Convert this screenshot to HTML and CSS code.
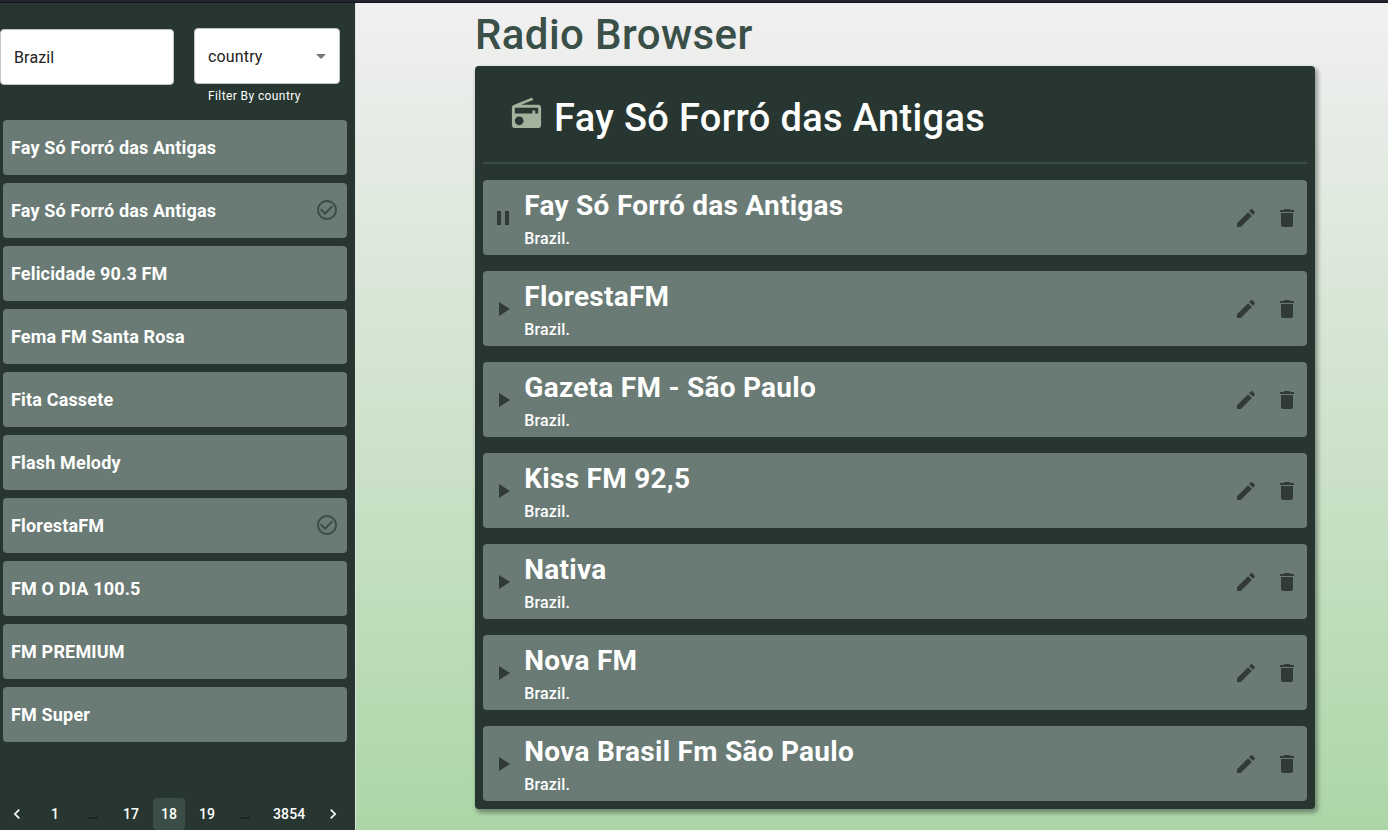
FILE: index.html
```
<!DOCTYPE html>
<html lang="en">
<head>
<meta charset="utf-8">
<title>Radio Browser</title>
<link rel="stylesheet" href="styles.css">
</head>
<body>
<svg class="defs" width="0" height="0">
  <symbol id="check" viewBox="0 0 24 24"><path d="M16.59 7.58 10 14.17l-3.59-3.58L5 12l5 5 8-8zM12 2C6.48 2 2 6.48 2 12s4.48 10 10 10 10-4.48 10-10S17.52 2 12 2zm0 18c-4.42 0-8-3.58-8-8s3.58-8 8-8 8 3.58 8 8-3.58 8-8 8z"/></symbol>
  <symbol id="play" viewBox="0 0 24 24"><path d="M8 5v14l11-7z"/></symbol>
  <symbol id="pause" viewBox="0 0 24 24"><path d="M6 19h4V5H6v14zm8-14v14h4V5h-4z"/></symbol>
  <symbol id="edit" viewBox="0 0 24 24"><path d="M3 17.25V21h3.75L17.81 9.94l-3.75-3.75L3 17.25zM20.71 7.04c.39-.39.39-1.02 0-1.41l-2.34-2.34a.9959.9959 0 0 0-1.41 0l-1.83 1.83 3.75 3.75 1.83-1.83z"/></symbol>
  <symbol id="trash" viewBox="0 0 24 24"><path d="M6 19c0 1.1.9 2 2 2h8c1.1 0 2-.9 2-2V7H6v12zM19 4h-3.500l-1-1h-5l-1 1H5v2h14V4z"/></symbol>
</svg>
<div class="strip"></div>
<div class="app">
  <aside class="sidebar">
    <div class="filters">
      <div class="field search">Brazil</div>
      <div class="filter">
        <div class="field select">country<svg class="arrow" viewBox="0 0 24 24"><path d="m7 10 5 5 5-5z"/></svg></div>
        <div class="helper">Filter By country</div>
      </div>
    </div>
    <ul class="stations">
      <li>Fay Só Forró das Antigas</li>
      <li>Fay Só Forró das Antigas<svg class="icon"><use href="#check"/></svg></li>
      <li>Felicidade 90.3 FM</li>
      <li>Fema FM Santa Rosa</li>
      <li>Fita Cassete</li>
      <li>Flash Melody</li>
      <li>FlorestaFM<svg class="icon"><use href="#check"/></svg></li>
      <li>FM O DIA 100.5</li>
      <li>FM PREMIUM</li>
      <li>FM Super</li>
    </ul>
    <nav class="pages">
      <span class="page"><svg viewBox="0 0 24 24"><path d="M15.41 7.41 14 6l-6 6 6 6 1.410-1.410L10.830 12z"/></svg></span>
      <span class="page">1</span>
      <span class="page dots">…</span>
      <span class="page">17</span>
      <span class="page current">18</span>
      <span class="page">19</span>
      <span class="page dots">…</span>
      <span class="page">3854</span>
      <span class="page"><svg viewBox="0 0 24 24"><path d="M10 6 8.590 7.410 13.170 12l-4.580 4.590L10 18l6-6z"/></svg></span>
    </nav>
  </aside>
  <main class="main">
    <h1>Radio Browser</h1>
    <section class="panel">
      <header class="playing">
        <svg class="radio" viewBox="0 0 24 24"><path d="M3.240 6.150C2.510 6.430 2 7.170 2 8v12c0 1.100.890 2 2 2h16c1.110 0 2-.900 2-2V8c0-1.110-.890-2-2-2H8.300l8.260-3.340L15.880 1 3.240 6.150zM7 20c-1.660 0-3-1.340-3-3s1.340-3 3-3 3 1.340 3 3-1.340 3-3 3zm13-8h-2v-2h-2v2H4V8h16v4z"/></svg>
        <h2>Fay Só Forró das Antigas</h2>
      </header>
      <div class="cards">
        <article class="card"><svg class="icon toggle"><use href="#pause"/></svg><div class="info"><h3>Fay Só Forró das Antigas</h3><p>Brazil.</p></div><svg class="icon"><use href="#edit"/></svg><svg class="icon"><use href="#trash"/></svg></article>
        <article class="card"><svg class="icon toggle"><use href="#play"/></svg><div class="info"><h3>FlorestaFM</h3><p>Brazil.</p></div><svg class="icon"><use href="#edit"/></svg><svg class="icon"><use href="#trash"/></svg></article>
        <article class="card"><svg class="icon toggle"><use href="#play"/></svg><div class="info"><h3>Gazeta FM - São Paulo</h3><p>Brazil.</p></div><svg class="icon"><use href="#edit"/></svg><svg class="icon"><use href="#trash"/></svg></article>
        <article class="card"><svg class="icon toggle"><use href="#play"/></svg><div class="info"><h3>Kiss FM 92,5</h3><p>Brazil.</p></div><svg class="icon"><use href="#edit"/></svg><svg class="icon"><use href="#trash"/></svg></article>
        <article class="card"><svg class="icon toggle"><use href="#play"/></svg><div class="info"><h3>Nativa</h3><p>Brazil.</p></div><svg class="icon"><use href="#edit"/></svg><svg class="icon"><use href="#trash"/></svg></article>
        <article class="card"><svg class="icon toggle"><use href="#play"/></svg><div class="info"><h3>Nova FM</h3><p>Brazil.</p></div><svg class="icon"><use href="#edit"/></svg><svg class="icon"><use href="#trash"/></svg></article>
        <article class="card"><svg class="icon toggle"><use href="#play"/></svg><div class="info"><h3>Nova Brasil Fm São Paulo</h3><p>Brazil.</p></div><svg class="icon"><use href="#edit"/></svg><svg class="icon"><use href="#trash"/></svg></article>
      </div>
    </section>
  </main>
</div>
</body>
</html>
```
FILE: styles.css
```
* { box-sizing: border-box; margin: 0; padding: 0; }
body { width: 1388px; height: 830px; overflow: hidden; font-family: Roboto, sans-serif; color: #fff; background: #273631; }
.defs { display: block; }
.strip { height: 3px; background: #25232f; border-bottom: 1px solid #15141c; }
.app { display: flex; height: 827px; }
.icon { width: 24px; height: 24px; flex: none; fill: #323a37; }

.sidebar { width: 356px; flex: none; display: flex; flex-direction: column; background: #273631; border-right: 1px solid #e0e0e0; }
.filters { display: flex; gap: 20px; height: 117px; padding-top: 25px; }
.field { height: 56px; padding: 0 13px; display: flex; align-items: center; justify-content: space-between; background: #fff; border: 1px solid #c4c4c4; border-radius: 4px; color: #212121; font-size: 16px; letter-spacing: .15px; }
.search { width: 174px; margin-top: 1px; }
.select { width: 146px; padding-right: 6px; }
.arrow { width: 24px; height: 24px; fill: #757575; }
.helper { margin: 2px 14px 0; font-size: 12px; line-height: 20px; letter-spacing: .4px; }
.stations { list-style: none; display: grid; gap: 8px; padding: 0 8px 0 3px; }
.stations li { height: 55px; padding: 0 8px; display: flex; align-items: center; justify-content: space-between; background: #6a7b75; border-radius: 4px; font-size: 18px; font-weight: 700; letter-spacing: .00938em; }
.stations .icon { margin-bottom: 2px; fill: #3a4d46; }
.pages { display: flex; padding: 56px 0 0; margin-left: -2px; }
.page { min-width: 32px; height: 32px; margin: 0 3px; padding: 0 6px; display: flex; align-items: center; justify-content: center; border-radius: 4px; font-size: 14px; font-weight: 500; letter-spacing: .14px; }
.page svg { width: 20px; height: 20px; flex: none; fill: #fff; }
.dots { color: #121816; }
.current { background: #3a4d46; }

.main { flex: 1; padding: 3px 73px 0 119px; background: linear-gradient(#f1f0f1, #add6a8); }
h1 { height: 60px; line-height: 58px; font-size: 42px; font-weight: 500; letter-spacing: .00938em; color: #3a4f48; }
.panel { width: 840px; height: 743px; padding: 0 8px 8px; background: #273631; border-radius: 4px; box-shadow: 2px 3px 4px 1px rgba(0,0,0,.35); }
.playing { height: 98px; padding: 4px 0 0 26px; display: flex; align-items: center; border-bottom: 2px solid #3a4d46; }
.radio { width: 35px; height: 35px; margin: 0 10px 6px 0; fill: #a3b29c; }
h2 { padding-top: 4px; font-size: 38px; font-weight: 500; letter-spacing: .009em; }
.cards { display: grid; gap: 16px; padding-top: 16px; }
.card { height: 75px; padding: 0 8px; display: flex; align-items: center; background: #6a7b75; border-radius: 4px; }
.toggle { margin-right: 9.300px; }
.info { flex: 1; align-self: stretch; padding-top: 5px; }
.info + .icon { margin-right: 17px; }
h3 { font-size: 28px; line-height: 42px; font-weight: 700; letter-spacing: .00938em; }
p { font-size: 16px; line-height: 24px; font-weight: 500; letter-spacing: .00938em; }
```
